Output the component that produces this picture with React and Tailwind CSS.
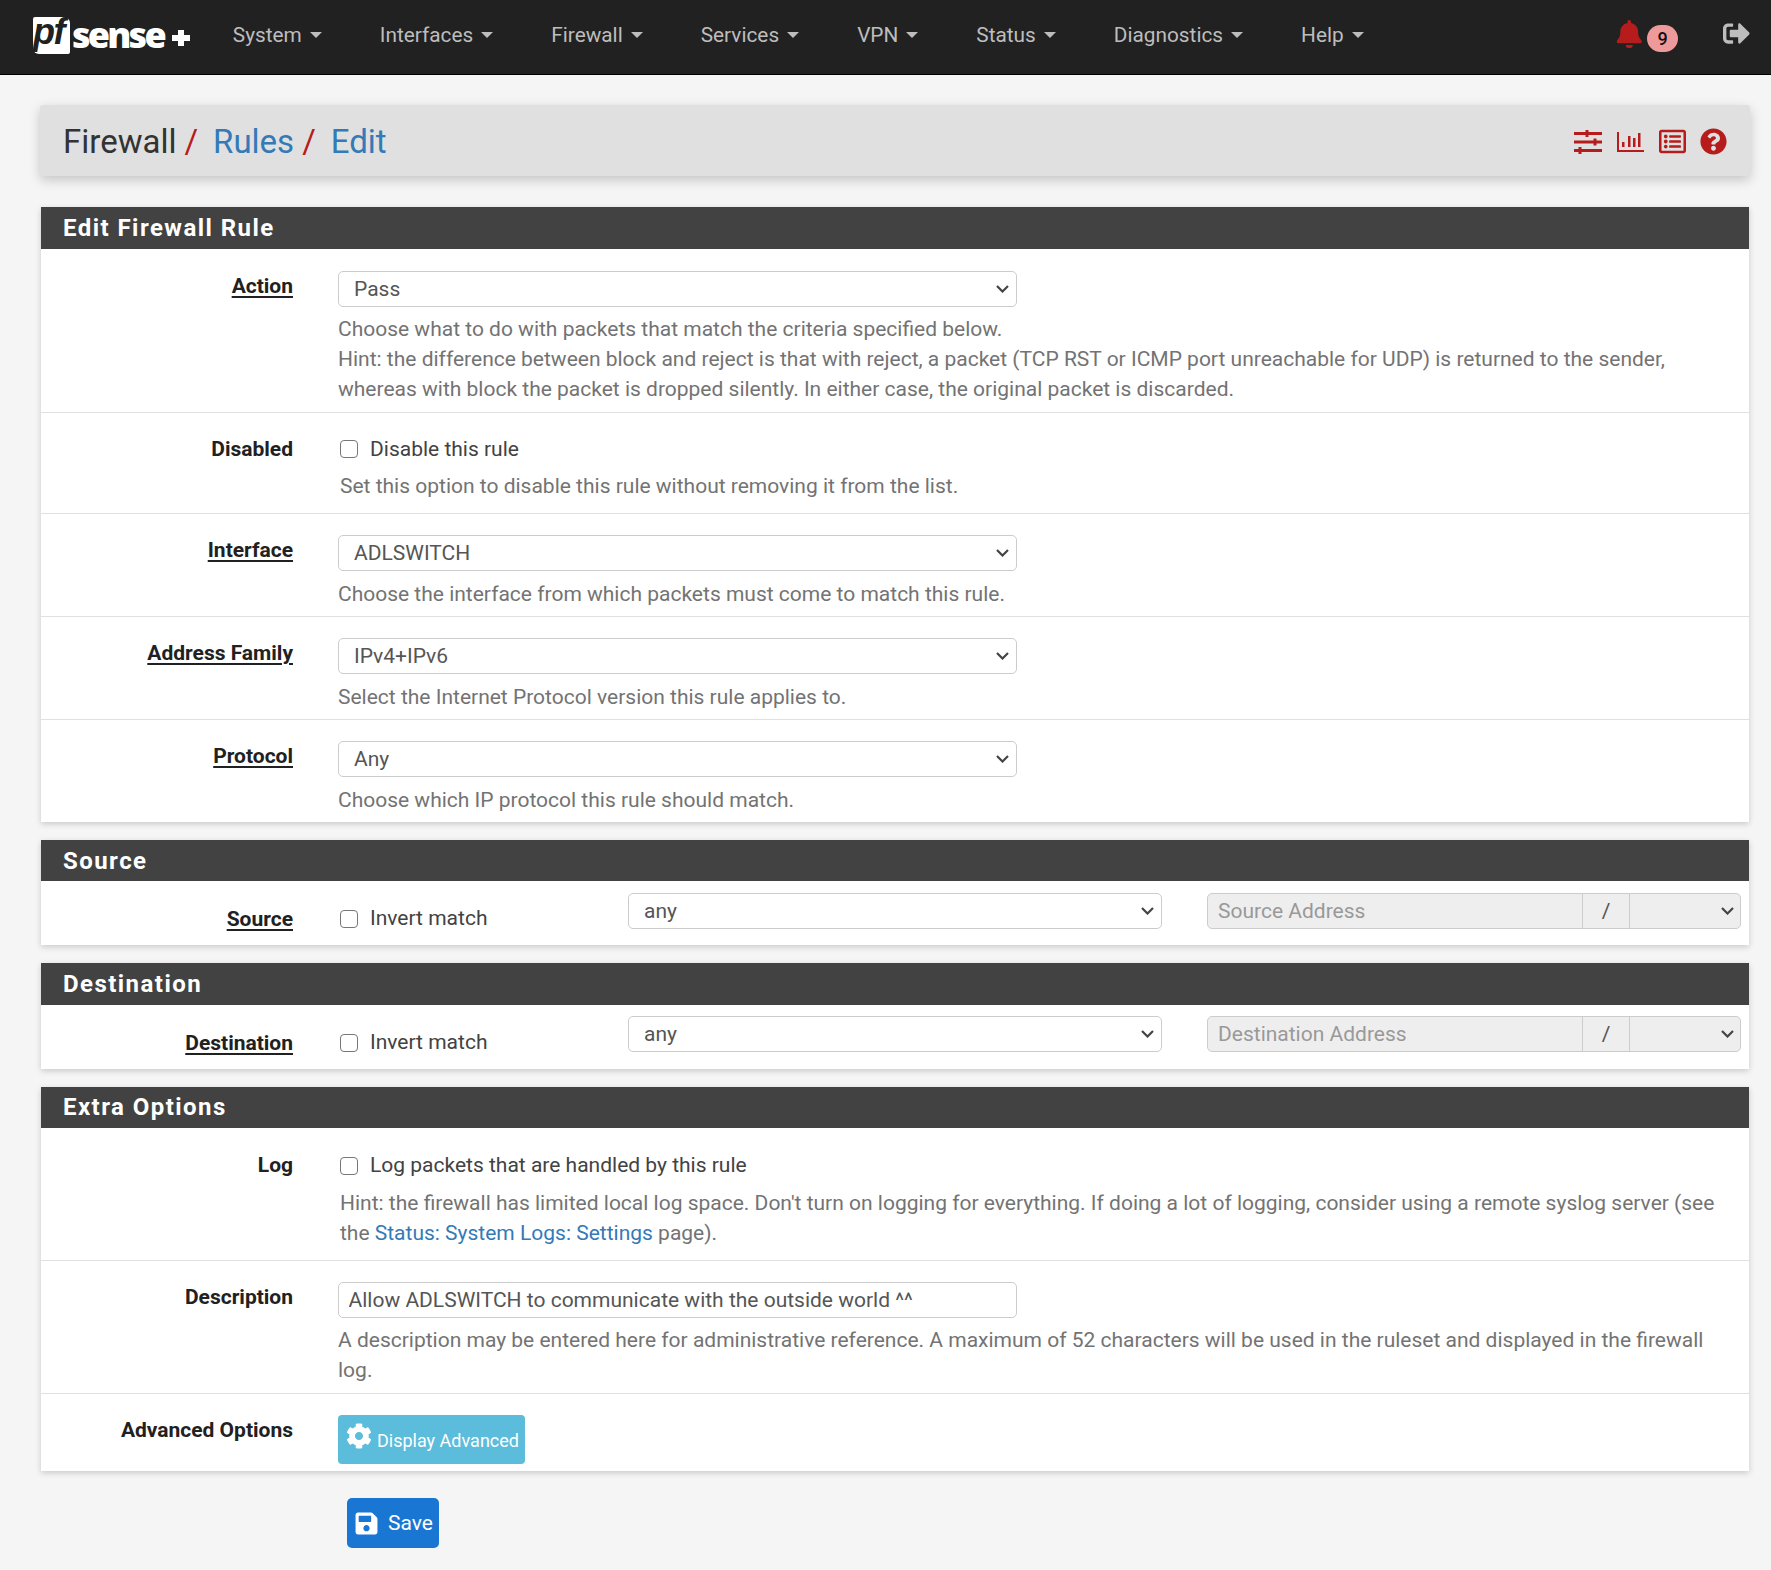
import React from "react";
import { FaBell, FaCog, FaSave, FaQuestionCircle, FaRegListAlt, FaSignOutAlt } from "react-icons/fa";

const FONT = "font-['Roboto','Liberation_Sans',sans-serif]";

function Caret() {
  return <span className="ml-[8px] inline-block w-0 h-0 border-x-[6px] border-x-transparent border-t-[6px] border-t-[#bdbdbd] align-middle" />;
}

function NavItem({ label }) {
  return (
    <a className="flex items-center px-[29px] text-[#bdbdbd] text-[20.8px] leading-[30px]">
      {label}
      <Caret />
    </a>
  );
}

function Logo() {
  return (
    <div className="flex items-center text-white">
      <span className="block w-[37px] h-[37px] bg-white rounded-[2px] rounded-tr-[6px] rounded-bl-[6px] text-[#212121] italic font-bold text-[36px] leading-[30px] tracking-[-1.5px] font-['Liberation_Sans',sans-serif]">pf</span>
      <span className="ml-[2px] text-[36px] leading-none font-extrabold tracking-[-2.8px] font-['Open_Sans',sans-serif]">sense</span>
      <svg className="ml-[8px] mt-[6px]" width="18" height="16" viewBox="0 0 18 16" fill="#fff">
        <rect x="6" y="0" width="6" height="16" /><rect x="0" y="5" width="18" height="6" />
      </svg>
    </div>
  );
}

function Section({ title, head = "h-[42px] leading-[42px]", children }) {
  return (
    <section className="bg-white shadow-[0_2px_6px_rgba(0,0,0,0.18)]">
      <h2 className={`bg-[#424242] text-white ${head} pl-[22px] text-[24px] font-bold tracking-[1.45px]`}>{title}</h2>
      {children}
    </section>
  );
}

function Label({ under, children, className = "" }) {
  return (
    <div className={`w-[252px] shrink-0 text-right font-bold text-[#212121] text-[21px] leading-[30px] ${className}`}>
      <span className={under ? "underline decoration-2 underline-offset-[3px]" : ""}>{children}</span>
    </div>
  );
}

function Row({ label, under, pt = "pt-[22px]", pb = "pb-[7px]", border = true, lab = "", children }) {
  return (
    <div className={`flex ${pt} ${pb} ${border ? "border-b border-[#e0e0e0]" : ""}`}>
      <Label under={under} className={lab}>{label}</Label>
      <div className="ml-[45px] flex-1 min-w-0">{children}</div>
    </div>
  );
}

function Chevron({ className = "right-[8px] top-[14px]" }) {
  return (
    <svg className={`absolute pointer-events-none ${className}`} width="13" height="8" viewBox="0 0 13 8" fill="none" stroke="#444" strokeWidth="2.2">
      <path d="M1 1l5.5 5.5L12 1" />
    </svg>
  );
}

function Select({ value, className = "w-[679px]" }) {
  return (
    <div className={`relative ${className}`}>
      <select defaultValue={value} className="block w-full h-[36px] appearance-none border border-[#ccc] rounded-[5px] bg-white pl-[15px] pt-[2px] text-[21px] text-[#555]">
        <option>{value}</option>
      </select>
      <Chevron />
    </div>
  );
}

function Hint({ children, className = "" }) {
  return <div className={`text-[#737373] text-[21px] leading-[30px] ${className}`}>{children}</div>;
}

function Check({ children, box = "" }) {
  return (
    <label className="flex items-center h-[30px] ml-[2px] text-[#424242] text-[21px]">
      <input type="checkbox" className={`w-[18px] h-[18px] mr-[12px] appearance-none border border-[#777] rounded-[4px] bg-white ${box}`} />
      {children}
    </label>
  );
}

function AddressRow({ label, placeholder, selectTop }) {
  return (
    <div className="flex h-[64px]">
      <Label under className="mt-[23px] self-start">{label}</Label>
      <div className="ml-[45px] w-[290px] shrink-0 self-start mt-[23px]"><Check>Invert match</Check></div>
      <div className={`flex items-start h-[36px] ${selectTop}`}>
        <Select value="any" className="w-[534px] shrink-0" />
        <div className="ml-[45px] flex h-[36px] w-[534px] border border-[#ccc] rounded-[5px] bg-[#eee] text-[21px] overflow-hidden">
          <input disabled placeholder={placeholder} className="flex-1 min-w-0 pl-[10px] pt-[2px] bg-transparent placeholder:text-[#999]" />
          <span className="w-[48px] flex items-center justify-center border-x border-[#ccc] text-[#555] pt-[2px]">/</span>
          <div className="relative w-[110px]">
            <select disabled className="block w-full h-full appearance-none bg-transparent text-[#555]"><option></option></select>
            <Chevron className="top-[13px] right-[6px]" />
          </div>
        </div>
      </div>
    </div>
  );
}

function Sliders() {
  return (
    <svg width="28" height="24" viewBox="0 0 28 24" fill="#b71c1c">
      <rect x="0" y="2" width="28" height="3" /><rect x="11.5" y="0" width="3" height="7" />
      <rect x="0" y="10.5" width="28" height="3" /><rect x="19.5" y="8.5" width="3" height="7" />
      <rect x="0" y="19" width="28" height="3" /><rect x="4.5" y="17" width="3" height="7" />
    </svg>
  );
}

function Bars() {
  return (
    <svg width="27" height="20" viewBox="0 0 27 20" fill="#b71c1c">
      <rect x="0" y="0" width="2" height="20" /><rect x="0" y="18" width="27" height="2" />
      <rect x="5" y="10" width="2.5" height="5" /><rect x="11" y="4" width="2.5" height="11" />
      <rect x="16" y="6" width="2.5" height="9" /><rect x="21" y="1" width="2.5" height="14" />
    </svg>
  );
}

export default function App() {
  return (
    <div className={`${FONT} bg-[#f5f5f5] min-h-[1570px] w-[1771px] overflow-hidden`}>
      <nav className="h-[75px] bg-[#212121] border-b border-black flex items-center pl-[33px] pb-[4px]">
        <Logo />
        <div className="flex ml-[14px]">
          {["System", "Interfaces", "Firewall", "Services", "VPN", "Status", "Diagnostics", "Help"].map((l) => <NavItem key={l} label={l} />)}
        </div>
        <div className="ml-auto flex items-center pr-[21px]">
          <FaBell className="text-[#b71c1c] text-[28.5px] -mt-[2px]" />
          <span className="ml-[4px] mt-[7px] w-[31px] h-[27px] rounded-full bg-[#ef9a9a] text-[#111] text-[18px] font-medium flex items-center justify-center">9</span>
          <FaSignOutAlt className="ml-[45px] text-[#bdbdbd] text-[27px] -mt-[3px]" />
        </div>
      </nav>

      <div className="pl-[41px] pr-[22px] pt-[30px] pb-[22px]">
        <header className="-ml-[1px] -mr-[1px] h-[71px] bg-[#e0e0e0] rounded-[3px] shadow-[0_4px_12px_rgba(0,0,0,0.2)] flex items-center pl-[23px] pr-[23px]">
          <div className="text-[33px] leading-none text-[#333] mt-[1px]">
            Firewall<span className="text-[#b71c1c] ml-[8px] mr-[15px]">/</span>
            <span className="text-[#337ab7]">Rules</span><span className="text-[#b71c1c] ml-[8px] mr-[15px]">/</span>
            <span className="text-[#337ab7]">Edit</span>
          </div>
          <div className="ml-auto mt-[2px] flex items-center gap-[15px]">
            <Sliders />
            <Bars />
            <FaRegListAlt className="text-[#b71c1c] text-[27px] -mr-[1px]" />
            <FaQuestionCircle className="text-[#b71c1c] text-[27px]" />
          </div>
        </header>

        <div className="mt-[31px]">
          <Section title="Edit Firewall Rule">
            <Row label="Action" under pb="pb-[8px]">
              <Select value="Pass" />
              <Hint className="mt-[7px]">
                Choose what to do with packets that match the criteria specified below.<br />
                Hint: the difference between block and reject is that with reject, a packet (TCP RST or ICMP port unreachable for UDP) is returned to the sender,<br />
                whereas with block the packet is dropped silently. In either case, the original packet is discarded.
              </Hint>
            </Row>
            <Row label="Disabled" pb="pb-[12px]" lab="-mt-[1px]">
              <Check box="-mt-[2px]">Disable this rule</Check>
              <Hint className="mt-[6px] ml-[2px]">Set this option to disable this rule without removing it from the list.</Hint>
            </Row>
            <Row label="Interface" under pt="pt-[21px]">
              <Select value="ADLSWITCH" />
              <Hint className="mt-[8px]">Choose the interface from which packets must come to match this rule.</Hint>
            </Row>
            <Row label="Address Family" under pt="pt-[21px]">
              <Select value="IPv4+IPv6" />
              <Hint className="mt-[8px]">Select the Internet Protocol version this rule applies to.</Hint>
            </Row>
            <Row label="Protocol" under pt="pt-[21px]" border={false}>
              <Select value="Any" />
              <Hint className="mt-[8px]">Choose which IP protocol this rule should match.</Hint>
            </Row>
          </Section>
        </div>

        <div className="mt-[18px]">
          <Section title="Source" head="h-[41px] leading-[43px]"><AddressRow label="Source" placeholder="Source Address" selectTop="mt-[12px]" /></Section>
        </div>
        <div className="mt-[18px]">
          <Section title="Destination"><AddressRow label="Destination" placeholder="Destination Address" selectTop="mt-[11px]" /></Section>
        </div>

        <div className="mt-[18px]">
          <Section title="Extra Options" head="h-[41px] leading-[41px]">
            <Row label="Log" pt="pt-[23px]" pb="pb-[12px]" lab="-mt-[1px]">
              <Check>Log packets that are handled by this rule</Check>
              <Hint className="mt-[7px] ml-[2px]">
                Hint: the firewall has limited local log space. Don't turn on logging for everything. If doing a lot of logging, consider using a remote syslog server (see<br />
                the <a className="text-[#337ab7]">Status: System Logs: Settings</a> page).
              </Hint>
            </Row>
            <Row label="Description" pt="pt-[21px]" pb="pb-[8px]">
              <input readOnly value="Allow ADLSWITCH to communicate with the outside world ^^" className="block w-[679px] h-[36px] border border-[#ccc] rounded-[5px] bg-white pl-[9.5px] text-[21px] text-[#555]" />
              <Hint className="mt-[7px]">
                A description may be entered here for administrative reference. A maximum of 52 characters will be used in the ruleset and displayed in the firewall<br />log.
              </Hint>
            </Row>
            <Row label="Advanced Options" pt="pt-[21px]" border={false} pb="pb-[7px]">
              <button className="flex items-center w-[187px] h-[49px] rounded-[4px] bg-[#5bbcdb] text-white text-[18px] pl-[8px] pt-[2px]">
                <FaCog className="text-[26px] mr-[5px] -mt-[10px]" />Display Advanced
              </button>
            </Row>
          </Section>
        </div>

        <button className="mt-[27px] ml-[306px] flex items-center w-[92px] h-[50px] rounded-[5px] bg-[#1976d2] text-white text-[21px] pl-[7px] pt-[2px]">
          <FaSave className="text-[25px] mr-[9px] -mt-[2px]" />Save
        </button>
      </div>
    </div>
  );
}
